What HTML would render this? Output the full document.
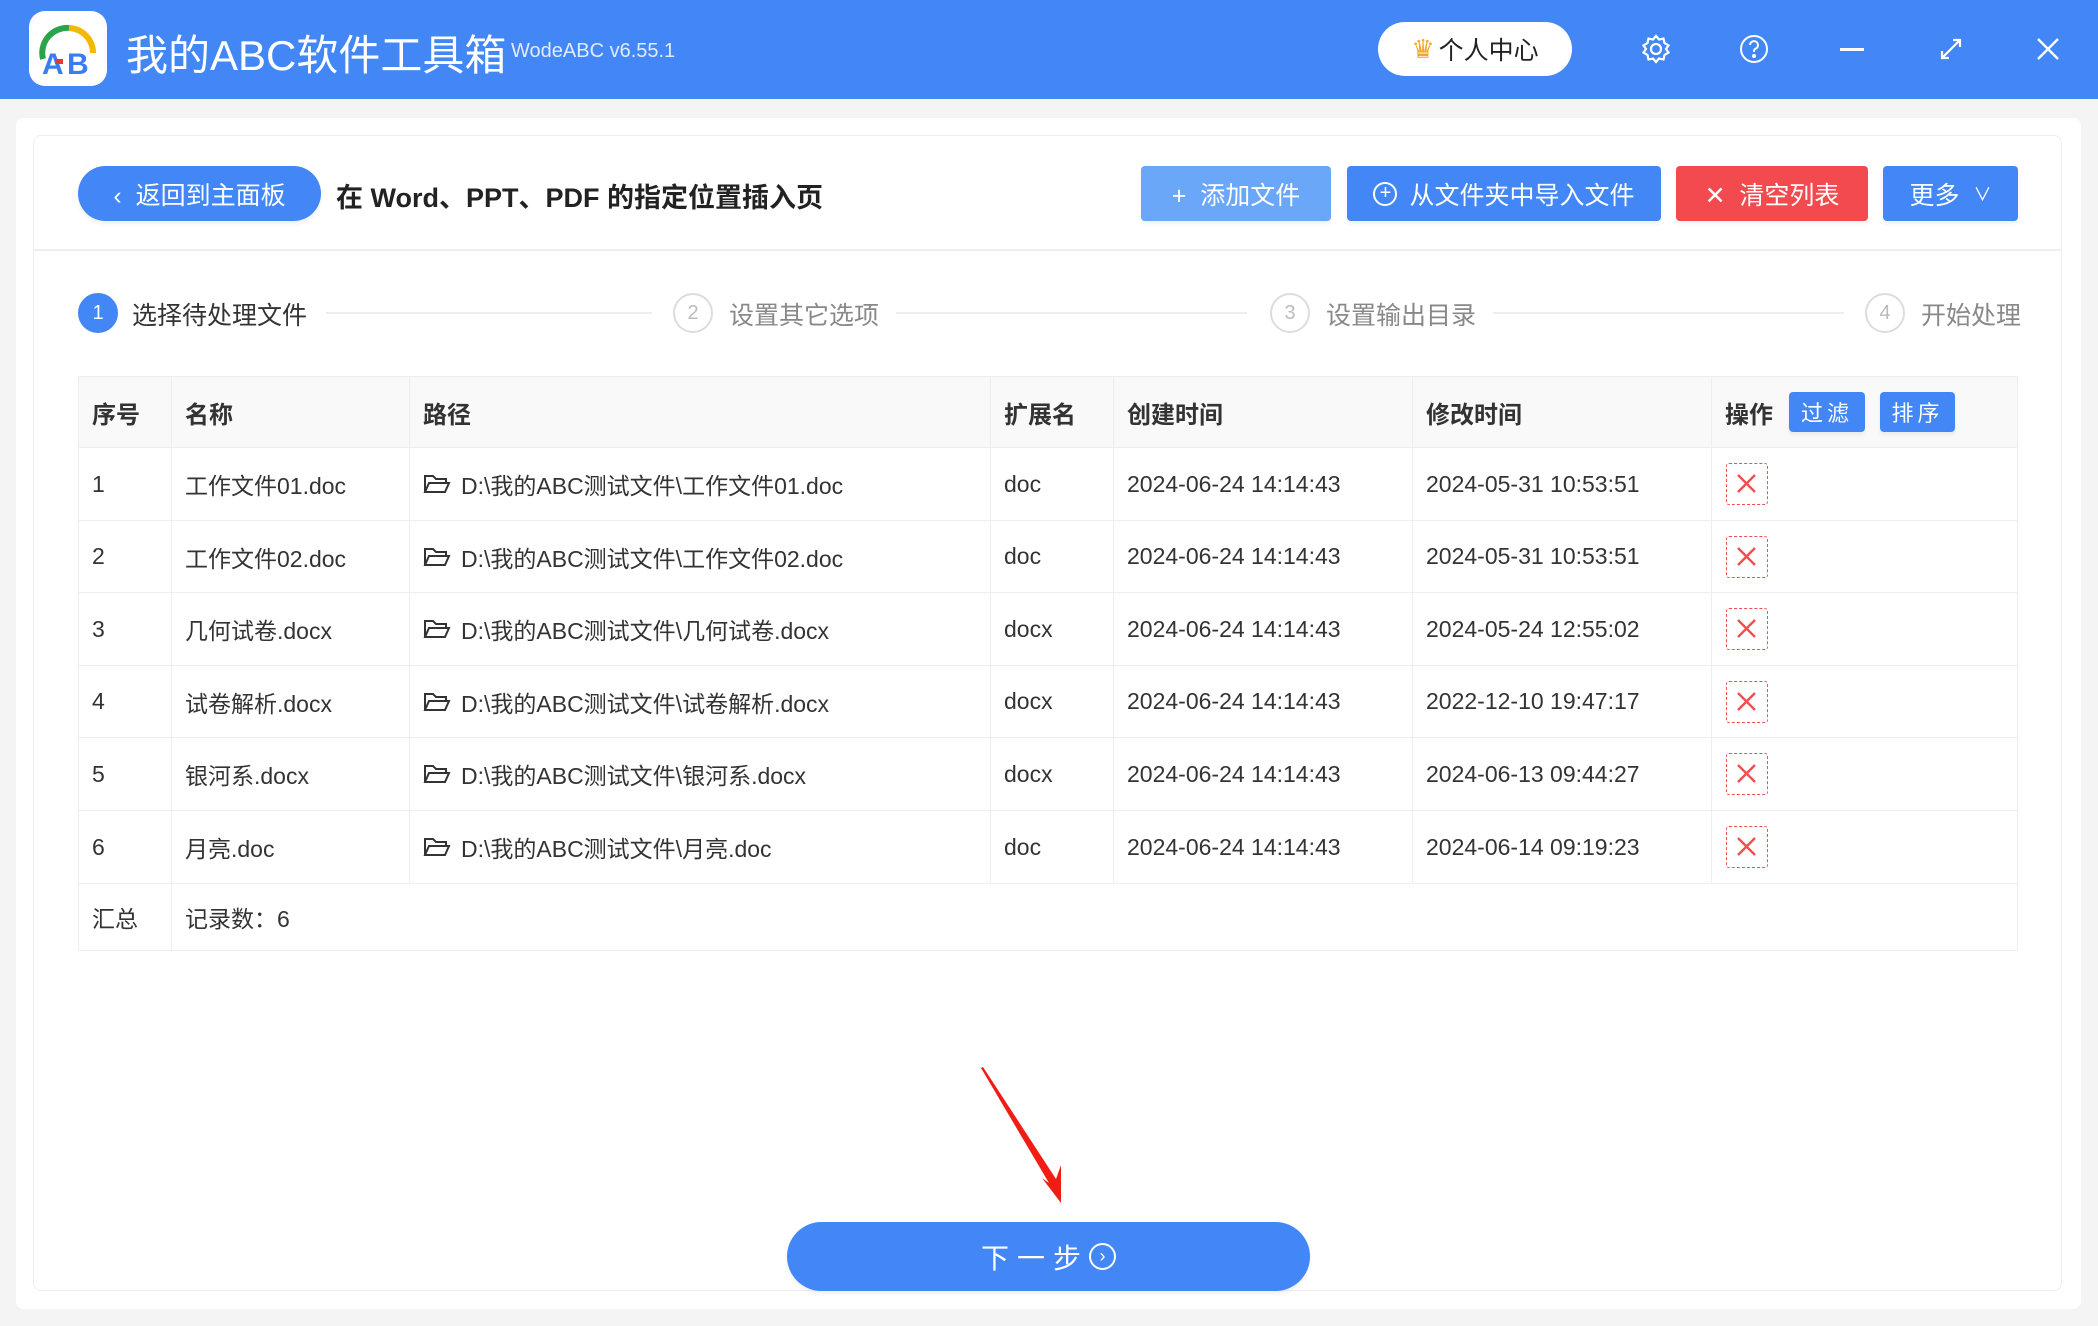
<!DOCTYPE html>
<html><head><meta charset="utf-8"><style>
*{margin:0;padding:0;box-sizing:border-box}
body{width:2098px;height:1326px;overflow:hidden;background:#f4f4f4;font-family:"Liberation Sans","Noto Sans CJK SC",sans-serif;color:#333;position:relative}
.a{position:absolute}
.hdr{left:0;top:0;width:2098px;height:99px;background:#4287f5}
.btn{position:absolute;color:#fff;font-size:25px;display:flex;align-items:center;justify-content:center;border-radius:4px;box-shadow:0 3px 4px rgba(0,0,0,.06)}
.circ{position:absolute;width:40px;height:40px;border-radius:50%;border:2px solid #ddd;color:#bbb;font-size:20px;display:flex;align-items:center;justify-content:center}
.stx{position:absolute;font-size:25px;color:#888;top:296px}
.ln{position:absolute;height:2px;background:#eee;top:312px}
.cell{position:absolute;font-size:23px;color:#333;display:flex;align-items:center;white-space:nowrap}
.th{font-weight:bold;font-size:24px}
.del{position:absolute;width:42px;height:42px;border:1.5px dashed #f05050;border-radius:3px}
</style></head><body>
<div class="a hdr"></div>
<div class="a" style="left:29px;top:11px;width:78px;height:75px;background:#fff;border-radius:16px"></div>
<svg class="a" style="left:29px;top:11px" width="78" height="75" viewBox="0 0 78 75">
<path d="M14 48 A25 25 0 0 1 40 17" stroke="#2aa44a" stroke-width="6" fill="none"/>
<path d="M40 17 A25 25 0 0 1 64 42" stroke="#f5b800" stroke-width="6" fill="none"/>
<text x="13" y="63" font-size="30" font-weight="bold" fill="#3b7cf0" font-family="Liberation Sans">A</text>
<text x="38" y="63" font-size="30" font-weight="bold" fill="#3b7cf0" font-family="Liberation Sans">B</text>
<rect x="26" y="48" width="8" height="5" fill="#e53935"/>
</svg>
<div class="a" style="left:126px;top:22px;font-size:42px;color:#fff">我的ABC软件工具箱</div>
<div class="a" style="left:511px;top:40px;font-size:20px;color:#e0ebff">WodeABC v6.55.1</div>
<div class="a" style="left:1378px;top:22px;width:194px;height:54px;background:#fff;border-radius:27px;display:flex;align-items:center;justify-content:center;font-size:25px;color:#222"><span style="color:#f5a623;font-size:26px;margin-right:4px">♛</span>个人中心</div>
<svg class="a" style="left:1640px;top:33px" width="32" height="32" viewBox="0 0 32 32" fill="none" stroke="#fff" stroke-width="2.2"><circle cx="16" cy="16" r="5"/><path d="M16 3l3 3.5 4.5-1 1 4.5 4 2.5-2.5 3.5 2.5 3.5-4 2.5-1 4.5-4.5-1-3 3.5-3-3.5-4.5 1-1-4.5-4-2.5 2.5-3.5-2.5-3.5 4-2.5 1-4.5 4.5 1z"/></svg>
<svg class="a" style="left:1739px;top:34px" width="30" height="30" viewBox="0 0 30 30" fill="none" stroke="#fff" stroke-width="2"><circle cx="15" cy="15" r="13"/><path d="M11 11a4 4 0 1 1 5 4c-1 .5-1 1.5-1 3"/><circle cx="15" cy="22" r="1" fill="#fff"/></svg>
<div class="a" style="left:1840px;top:48px;width:24px;height:3px;background:#fff"></div>
<svg class="a" style="left:1938px;top:36px" width="26" height="26" viewBox="0 0 26 26" stroke="#fff" stroke-width="2.2" fill="none"><path d="M4 22L22 4M15 4h7v7M4 15v7h7"/></svg>
<svg class="a" style="left:2036px;top:37px" width="24" height="24" viewBox="0 0 24 24" stroke="#fff" stroke-width="2.4"><path d="M2 2L22 22M22 2L2 22"/></svg>

<div class="a" style="left:16px;top:118px;width:2065px;height:1191px;background:#fff;border-radius:8px"></div>
<div class="a" style="left:33px;top:135px;width:2029px;height:1156px;border:1px solid #eee;border-radius:8px"></div>
<div class="a" style="left:34px;top:249px;width:2027px;height:2px;background:#eee"></div>

<div class="btn" style="left:78px;top:166px;width:243px;height:55px;border-radius:28px;background:#4287f5">‹&nbsp;&nbsp;返回到主面板</div>
<div class="a" style="left:336px;top:176px;font-size:27px;font-weight:bold;color:#222">在 Word、PPT、PDF 的指定位置插入页</div>
<div class="btn" style="left:1141px;top:166px;width:190px;height:55px;background:#6aa7f8">+&nbsp;&nbsp;添加文件</div>
<div class="btn" style="left:1347px;top:166px;width:314px;height:55px;background:#4287f5"><span style="display:inline-flex;width:24px;height:24px;border:2px solid #fff;border-radius:50%;font-size:20px;align-items:center;justify-content:center;margin-right:12px">+</span>从文件夹中导入文件</div>
<div class="btn" style="left:1676px;top:166px;width:192px;height:55px;background:#f24a4e">✕&nbsp;&nbsp;清空列表</div>
<div class="btn" style="left:1883px;top:166px;width:135px;height:55px;background:#4287f5">更多&nbsp;&nbsp;<span style="font-size:18px">∨</span></div>

<div class="circ" style="left:78px;top:293px;background:#4287f5;border-color:#4287f5;color:#fff">1</div>
<div class="stx" style="left:132px;color:#333">选择待处理文件</div>
<div class="ln" style="left:326px;width:326px"></div>
<div class="circ" style="left:673px;top:293px">2</div>
<div class="stx" style="left:729px">设置其它选项</div>
<div class="ln" style="left:896px;width:351px"></div>
<div class="circ" style="left:1270px;top:293px">3</div>
<div class="stx" style="left:1326px">设置输出目录</div>
<div class="ln" style="left:1493px;width:351px"></div>
<div class="circ" style="left:1865px;top:293px">4</div>
<div class="stx" style="left:1921px">开始处理</div>

<div class="a" style="left:78px;top:376px;width:1940px;height:575px;border:1px solid #eee"></div>
<div class="a" style="left:79px;top:377px;width:1938px;height:71px;background:#f9f9f9"></div>
<div id="tb"></div>
<div class="btn" style="left:1789px;top:392px;width:76px;height:40px;font-size:22px;letter-spacing:4px;background:#4287f5">过滤</div>
<div class="btn" style="left:1880px;top:392px;width:75px;height:40px;font-size:22px;letter-spacing:4px;background:#4287f5">排序</div>

<svg class="a" style="left:970px;top:1065px" width="100" height="145" viewBox="0 0 100 145"><path d="M11 3L79 118 72 113 91 138 91 100 86 114 13 2z" fill="#f01d14"/></svg>
<div class="btn" style="left:787px;top:1222px;width:523px;height:69px;border-radius:35px;background:#4287f5;font-size:28px;letter-spacing:8px">下一步 <span style="display:inline-flex;width:27px;height:27px;border:2px solid #fff;border-radius:50%;font-size:18px;align-items:center;justify-content:center;letter-spacing:0">›</span></div>

<script>
var cols=[78,171,409,990,1113,1412,1711,2018];
var hd=["序号","名称","路径","扩展名","创建时间","修改时间","操作"];
var rows=[["1","工作文件01.doc","D:\\我的ABC测试文件\\工作文件01.doc","doc","2024-06-24 14:14:43","2024-05-31 10:53:51"],
["2","工作文件02.doc","D:\\我的ABC测试文件\\工作文件02.doc","doc","2024-06-24 14:14:43","2024-05-31 10:53:51"],
["3","几何试卷.docx","D:\\我的ABC测试文件\\几何试卷.docx","docx","2024-06-24 14:14:43","2024-05-24 12:55:02"],
["4","试卷解析.docx","D:\\我的ABC测试文件\\试卷解析.docx","docx","2024-06-24 14:14:43","2022-12-10 19:47:17"],
["5","银河系.docx","D:\\我的ABC测试文件\\银河系.docx","docx","2024-06-24 14:14:43","2024-06-13 09:44:27"],
["6","月亮.doc","D:\\我的ABC测试文件\\月亮.doc","doc","2024-06-24 14:14:43","2024-06-14 09:19:23"]];
var h="";
function c(x,y,w,hh,t,cls){return '<div class="cell '+(cls||'')+'" style="left:'+(x+14)+'px;top:'+y+'px;width:'+(w-14)+'px;height:'+hh+'px">'+t+'</div>';}
for(var i=1;i<7;i++)h+='<div class="a" style="left:'+cols[i]+'px;top:377px;width:1px;height:'+(i==1?574:506)+'px;background:#eee"></div>';
for(var i=0;i<7;i++)h+=c(cols[i],377,cols[i+1]-cols[i],71,hd[i],'th');
var fold='<svg width="28" height="22" viewBox="0 0 28 22" style="margin-right:10px" fill="none" stroke="#333" stroke-width="2"><path d="M2 19V3h8l3 3h10v4M2 19l4-9h20l-4 9z"/></svg>';
for(var r=0;r<6;r++){var y=448+r*72.6;
h+='<div class="a" style="left:79px;top:'+(y-1)+'px;width:1938px;height:1px;background:#eee"></div>';
for(var i=0;i<6;i++)h+=c(cols[i],y,cols[i+1]-cols[i],72,(i==2?fold:'')+rows[r][i]);
h+='<div class="del" style="left:1726px;top:'+(y+15)+'px"><svg width="39" height="39" viewBox="0 0 39 39" stroke="#f05050" stroke-width="2.4"><path d="M11 11L28 28M28 11L11 28"/></svg></div>';}
h+='<div class="a" style="left:79px;top:883px;width:1938px;height:1px;background:#eee"></div>';
h+=c(78,884,93,66,"汇总")+c(171,884,400,66,"记录数：6");
document.getElementById("tb").innerHTML=h;
</script>
</body></html>
